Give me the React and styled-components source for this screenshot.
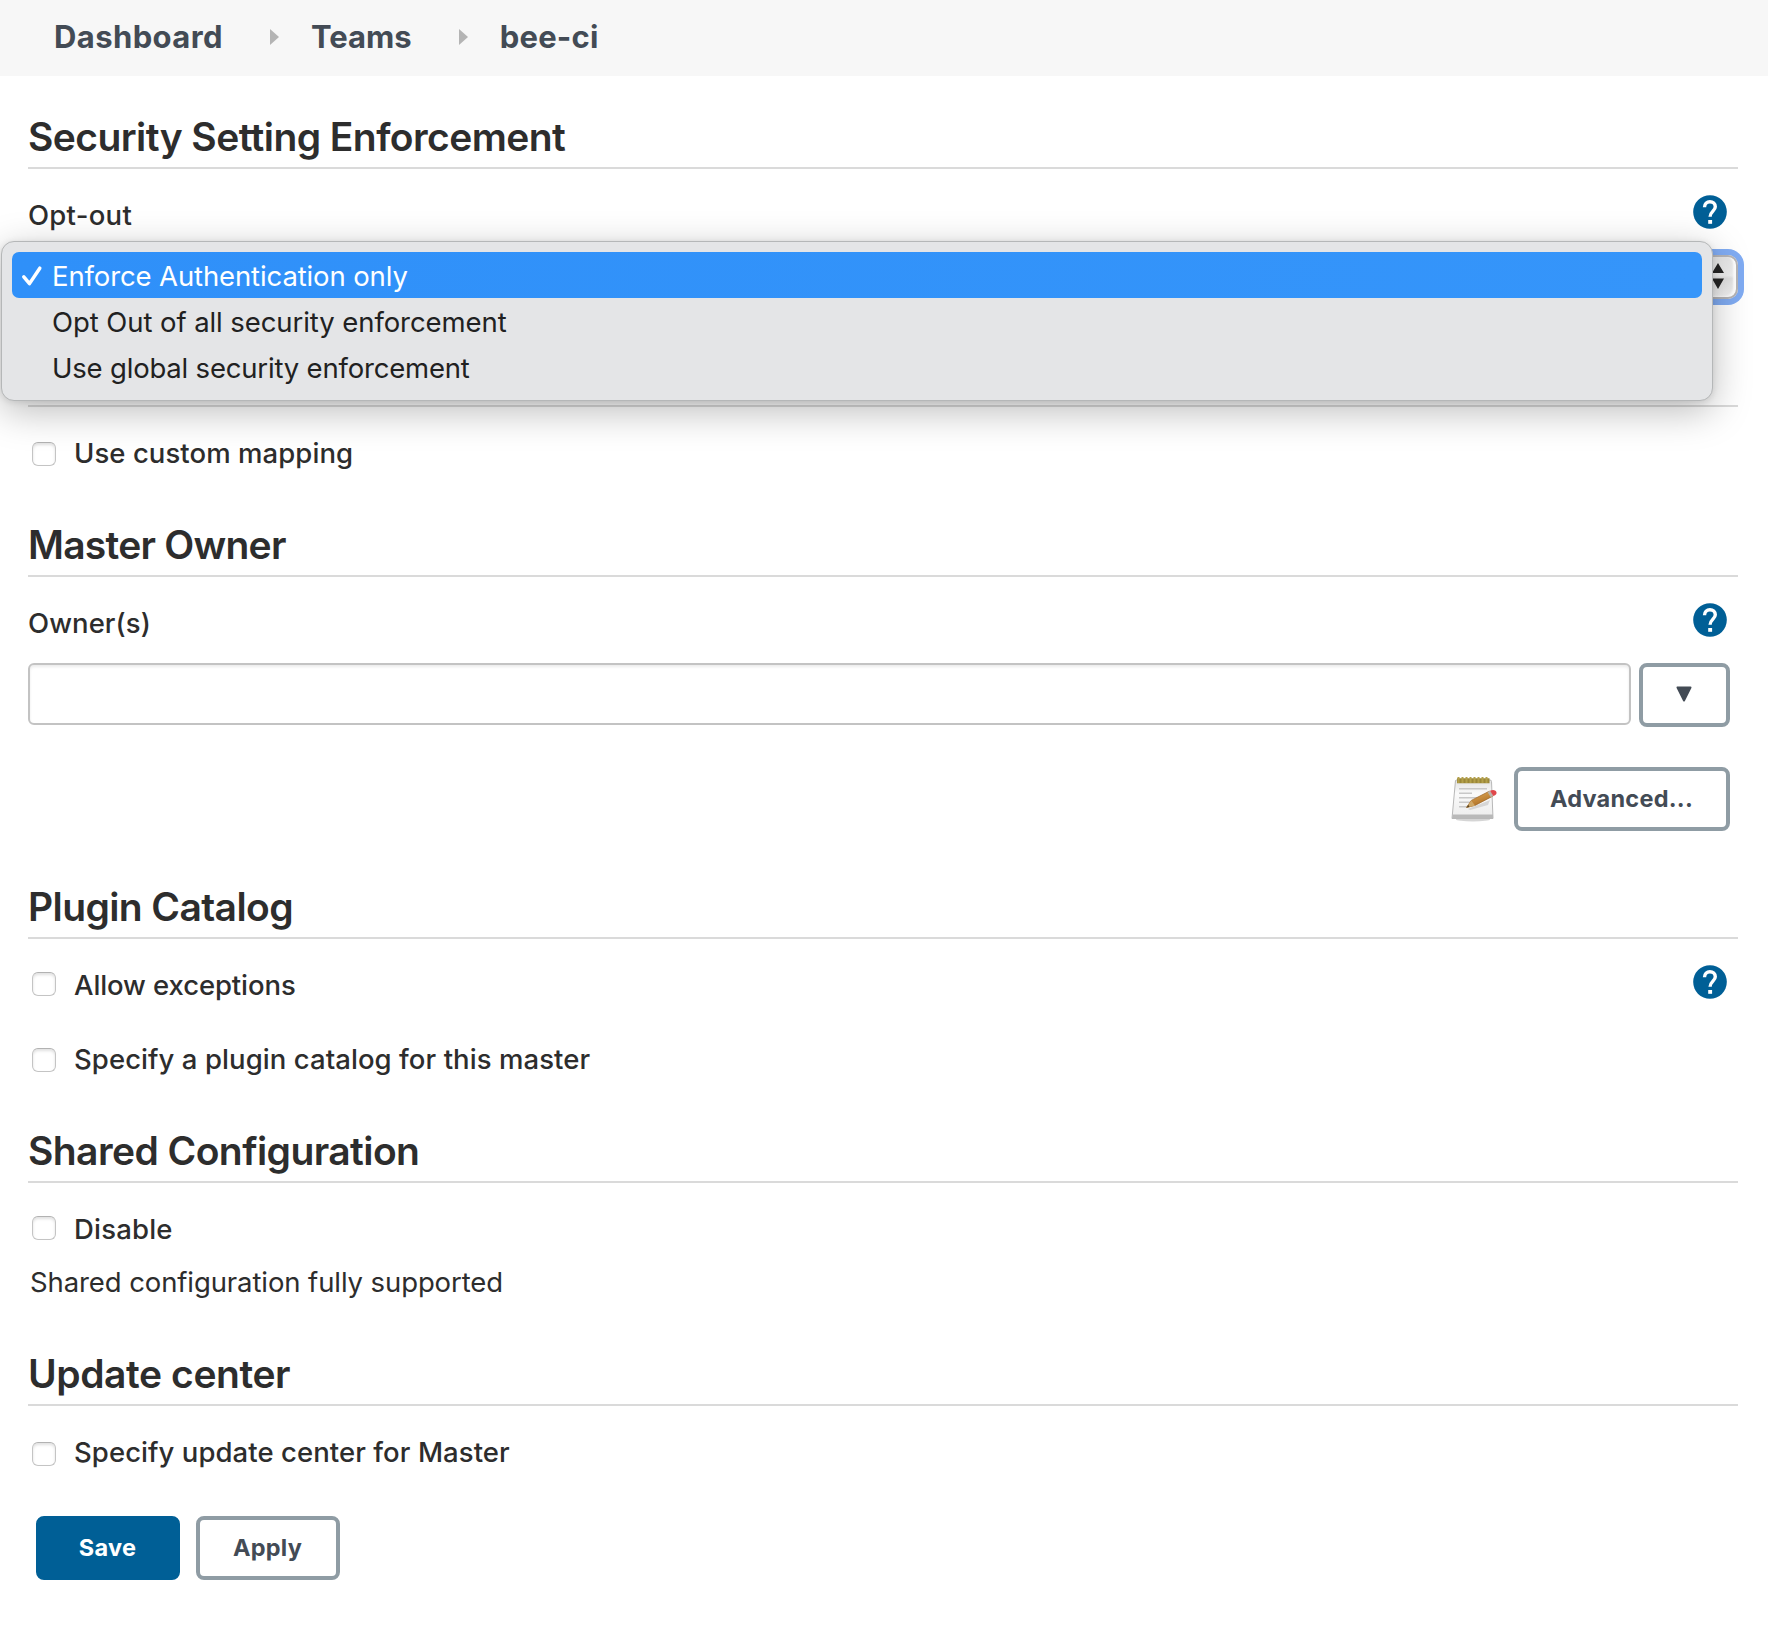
import React from "react";
import styled, { createGlobalStyle, css } from "styled-components";

const GlobalStyle = createGlobalStyle`
  *, *::before, *::after { box-sizing: border-box; }
  body {
    margin: 0;
    background: #fff;
    color: #2d2d2d;
    font-family: Inter, "Liberation Sans", sans-serif;
    font-size: 27.5px;
  }
`;

const Page = styled.div`
  min-height: 1636px;
`;

const Breadcrumbs = styled.nav`
  display: flex;
  align-items: center;
  height: 76px;
  padding: 0 54px 3px;
  background: #f7f7f7;
`;

const Crumb = styled.a`
  color: #434b55;
  font-size: 31px;
  font-weight: 700;
  line-height: 73px;
  letter-spacing: ${(p) => p.$tracking}px;
`;

const CrumbArrow = styled.span`
  margin: 0 32px 0 47px;
  border: 8px solid transparent;
  border-left: 9px solid #b4b4b4;
  border-right: 0;
`;

const Form = styled.main`
  padding: 37px 30px 0 28px;
`;

const Section = styled.section`
  margin-top: ${(p) => p.$gap || 0}px;
`;

const Title = styled.h2`
  height: 56px;
  margin: 0 0 26px;
  border-bottom: 2px solid #dadada;
  font-size: 39px;
  font-weight: 600;
  line-height: 48px;
  letter-spacing: ${(p) => p.$tracking || -0.57}px;
`;

const Row = styled.div`
  display: flex;
  align-items: flex-start;
  height: 40px;
  margin-top: ${(p) => p.$gap || 0}px;
  padding-right: 11px;
`;

const Label = styled.label`
  flex: 1;
  font-weight: 500;
  line-height: 40px;
  letter-spacing: ${(p) => p.$tracking || 0.07}px;
`;

const Checkbox = styled.input.attrs({ type: "checkbox" })`
  appearance: none;
  width: 24px;
  height: 24px;
  margin: ${(p) => p.$drop}px 18px 0 4px;
  border: 1.5px solid #c4c4c4;
  border-top-color: #b2b2b2;
  border-radius: 6px;
  background: #fff;
  box-shadow: inset 0 2px 3px rgba(0, 0, 0, 0.12);
`;

const Note = styled.p`
  margin: 13px 0 0 2px;
  line-height: 40px;
  letter-spacing: -0.1px;
`;

const HelpSvg = styled.svg`
  display: block;
  width: 34px;
  height: 34px;
`;

const SelectField = styled.div`
  position: relative;
  margin-top: 20px;
`;

const SelectBox = styled.div`
  display: flex;
  align-items: center;
  justify-content: flex-end;
  height: 44px;
  padding: 0 12px 2px 0;
  border: 2px solid #b6b5b7;
  border-radius: 10px;
  background: linear-gradient(#e6e6e6, #f1f1f1 46%, #e2e2e2 54%, #f4f4f4);
  box-shadow: 0 0 0 6px #80acf3, inset -3px -1px 2px #fff;
`;

const Menu = styled.ul`
  position: absolute;
  top: -14px;
  left: -27px;
  width: 1712px;
  margin: 0;
  padding: 10px;
  border: 1px solid #b5b7b8;
  border-radius: 13px;
  background: #e4e5e7;
  box-shadow: 0 10px 38px rgba(0, 0, 0, 0.27), 0 1px 6px rgba(0, 0, 0, 0.1);
  list-style: none;
`;

const Option = styled.li`
  display: flex;
  align-items: center;
  height: 46px;
  padding: 2px 0 0 40px;
  border-radius: 7px;
  color: #212121;
  line-height: 44px;
  letter-spacing: ${(p) => p.$tracking}px;
  ${(p) =>
    p.$selected &&
    css`
      padding-left: 9px;
      background: linear-gradient(90deg, #2f90f9, #3595fa);
      color: #fff;
    `}
`;

const CheckSvg = styled.svg`
  width: 22px;
  height: 22px;
  margin-right: 9px;
`;

const ComboRow = styled.div`
  display: flex;
  align-items: flex-start;
  gap: 8px;
  margin-top: 20px;
  padding-right: 8px;
`;

const TextInput = styled.input`
  flex: 1;
  min-width: 0;
  height: 62px;
  border: 2px solid #c3c3c3;
  border-radius: 6px;
  background: #fff;
  box-shadow: inset 0 2px 3px rgba(0, 0, 0, 0.08);
`;

const Button = styled.button`
  display: flex;
  align-items: center;
  justify-content: center;
  width: ${(p) => p.$width}px;
  height: 64px;
  padding: 0 1px 2px 0;
  border: 4px solid ${(p) => (p.$primary ? "#005f96" : "#8f9ca4")};
  border-radius: 8px;
  background: ${(p) => (p.$primary ? "#005f96" : "#fff")};
  color: ${(p) => (p.$primary ? "#fff" : "#434b55")};
  font: 700 23.5px Inter, "Liberation Sans", sans-serif;
  letter-spacing: 0.25px;
`;

const AdvancedRow = styled.div`
  display: flex;
  align-items: center;
  justify-content: flex-end;
  gap: 16px;
  margin-top: 40px;
  padding-right: 8px;
`;

const Actions = styled.div`
  display: flex;
  gap: 16px;
  margin-top: 44px;
  padding-left: 8px;
`;

function Help() {
  return (
    <HelpSvg viewBox="0 0 34 34" role="img" aria-label="Help">
      <circle cx="17" cy="17" r="16.8" fill="#005f96" />
      <path
        d="M11.5 12.200C11.500 8.700 13.900 6.700 16.900 6.700s5.400 2 5.400 5.100c0 4.200-5.200 4.700-5.200 10"
        fill="none"
        stroke="#fff"
        strokeWidth="3.4"
      />
      <rect x="15.200" y="25" width="3.900" height="3.800" fill="#fff" />
    </HelpSvg>
  );
}

function SortArrows() {
  return (
    <svg width="12" height="26" viewBox="0 0 12 26">
      <path d="M6 0L12 10H0zM6 26L0 15.6H12z" fill="#262626" />
    </svg>
  );
}

function Check() {
  return (
    <CheckSvg viewBox="0 0 22 22">
      <path
        d="M2.800 11.800L8.500 18.600L18.800 3.200"
        fill="none"
        stroke="#fff"
        strokeWidth="3.5"
        strokeLinecap="round"
        strokeLinejoin="round"
      />
    </CheckSvg>
  );
}

function Notepad() {
  return (
    <svg width="47" height="47" viewBox="0 0 47 47">
      <defs>
        <linearGradient id="paper" x1="0" y1="0" x2="0" y2="1">
          <stop offset="0" stopColor="#e2e2e2" />
          <stop offset="0.35" stopColor="#fafafa" />
          <stop offset="1" stopColor="#ececec" />
        </linearGradient>
        <linearGradient id="pencil" x1="0" y1="0" x2="0.5" y2="1">
          <stop offset="0" stopColor="#e8b461" />
          <stop offset="1" stopColor="#a9691f" />
        </linearGradient>
      </defs>
      <ellipse cx="22" cy="43.4" rx="17" ry="2" fill="#d5d5d5" />
      <path d="M4.500 4.500Q5 4 6 4h33q1.500 0 1.500 1.500l1.500 37H1z" fill="url(#paper)" stroke="#b8b8b8" strokeWidth="1" />
      <path d="M1.800 38.500h40.200v3.800H1z" fill="#b9b9b9" />
      <path d="M6 2.200h32.500v5H6z" fill="#9a8738" />
      <path
        d="M7.500 1v6M11.500 1v6M15.500 1v6M19.500 1v6M23.500 1v6M27.500 1v6M31.500 1v6M35.500 1v6"
        stroke="#b3a04a"
        strokeWidth="2"
      />
      <path d="M8 12.7h28M8 17.200h13M8 21.7h22M8 26.200h14M8 30.700h9" stroke="#c8c8c8" strokeWidth="1.6" />
      <path d="M17 33l22-9-2 5-18 5z" fill="#aaa" opacity="0.4" />
      <path d="M15.5 31.5l4.8-7.1L38.5 15.1l3.200 5.100-17.600 9.200z" fill="url(#pencil)" stroke="#9b6425" strokeWidth="0.7" />
      <path d="M15.5 31.5l4.8-7.1 3.8 5.300z" fill="#cfa766" />
      <path d="M15.5 31.5l1.7-2.8 1.4 2.2z" fill="#5a4320" />
      <path d="M36.5 16.100l2.500-1.3 3.200 5-2.4 1.4z" fill="#b9b4ad" />
      <path d="M39 14.800c3-1.6 5.300-.8 6.300 1 .9 1.700-.3 3.500-3 4.200z" fill="#e0474a" />
    </svg>
  );
}

function CheckRow({ children, drop, gap, tracking, help }) {
  return (
    <Row $gap={gap}>
      <Checkbox $drop={drop} aria-label={children} />
      <Label $tracking={tracking}>{children}</Label>
      {help && <Help />}
    </Row>
  );
}

export default function App() {
  return (
    <Page>
      <GlobalStyle />
      <Breadcrumbs>
        <Crumb $tracking={0.4}>Dashboard</Crumb>
        <CrumbArrow />
        <Crumb $tracking={0}>Teams</Crumb>
        <CrumbArrow />
        <Crumb $tracking={0.25}>bee-ci</Crumb>
      </Breadcrumbs>
      <Form>
        <Section>
          <Title>Security Setting Enforcement</Title>
          <Row>
            <Label $tracking={0.27}>Opt-out</Label>
            <Help />
          </Row>
          <SelectField>
            <SelectBox>
              <SortArrows />
            </SelectBox>
            <Menu>
              <Option $selected $tracking={-0.12}>
                <Check />
                Enforce Authentication only
              </Option>
              <Option $tracking={-0.08}>Opt Out of all security enforcement</Option>
              <Option $tracking={-0.19}>Use global security enforcement</Option>
            </Menu>
          </SelectField>
        </Section>
        <Section $gap={52}>
          <Title />
          <CheckRow drop={9}>Use custom mapping</CheckRow>
        </Section>
        <Section $gap={48}>
          <Title $tracking={-0.75}>Master Owner</Title>
          <Row>
            <Label>Owner(s)</Label>
            <Help />
          </Row>
          <ComboRow>
            <TextInput aria-label="Owner(s)" />
            <Button $width={91} aria-label="Show owners">
              <svg width="16" height="16" viewBox="0 0 16 16">
                <path
                  d="M1.5 1.5H14.5L8 14.5z"
                  fill="#434b55"
                  stroke="#434b55"
                  strokeWidth="2"
                  strokeLinejoin="round"
                />
              </svg>
            </Button>
          </ComboRow>
          <AdvancedRow>
            <Notepad />
            <Button $width={216}>Advanced...</Button>
          </AdvancedRow>
        </Section>
        <Section $gap={52}>
          <Title $tracking={-0.6}>Plugin Catalog</Title>
          <CheckRow drop={7} tracking={-0.1} help>
            Allow exceptions
          </CheckRow>
          <CheckRow drop={9} gap={34}>
            Specify a plugin catalog for this master
          </CheckRow>
        </Section>
        <Section $gap={48}>
          <Title>Shared Configuration</Title>
          <CheckRow drop={7} tracking={0.19}>
            Disable
          </CheckRow>
          <Note>Shared configuration fully supported</Note>
        </Section>
        <Section $gap={48}>
          <Title $tracking={-0.42}>Update center</Title>
          <CheckRow drop={10}>Specify update center for Master</CheckRow>
        </Section>
        <Actions>
          <Button $width={144} $primary>
            Save
          </Button>
          <Button $width={144}>Apply</Button>
        </Actions>
      </Form>
    </Page>
  );
}
